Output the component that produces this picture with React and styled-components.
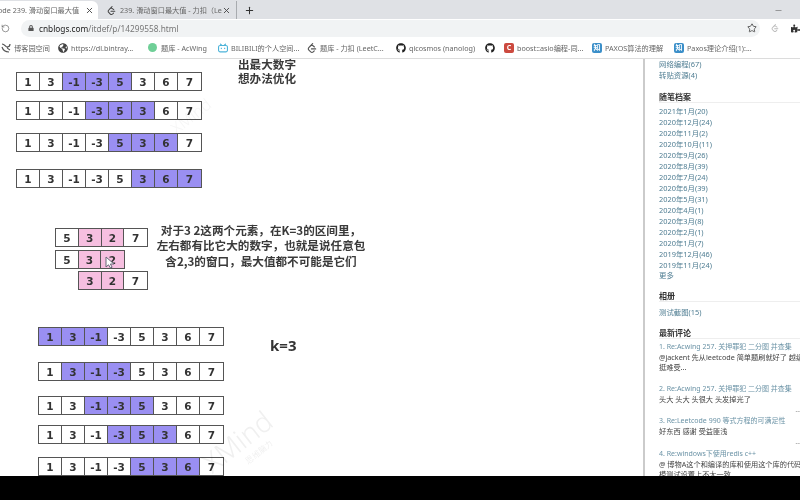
import React from 'react';
import styled, { createGlobalStyle } from 'styled-components';
import { FaGithub, FaPuzzlePiece, FaLock, FaGlobeAmericas } from 'react-icons/fa';
import { SiLeetcode, SiBilibili } from 'react-icons/si';
import { Star, RotateCw, Plus, X, Minus } from 'lucide-react';

const Global = createGlobalStyle`
  html, body { margin: 0; padding: 0; background: #000; }
  * { box-sizing: border-box; }
`;
const UI = `"Noto Sans", "Noto Sans CJK SC", sans-serif`;

const Page = styled.div`
  width: 800px; height: 500px; display: flex; flex-direction: column; overflow: hidden; background: #000;
`;
const Frame = styled.div`
  position: relative; height: 476px; display: flex; flex-direction: column; overflow: hidden;
  background: #fff; filter: blur(0.45px); font-family: ${UI};
`;
const TabStrip = styled.div`
  height: 19px; flex: none; display: flex; align-items: flex-end; background: #dfe1e5; color: #555;
`;
const ActiveTab = styled.div`
  width: 98px; height: 18px; flex: none; display: flex; align-items: center; justify-content: space-between;
  padding-right: 4px; background: #fff; border-top-right-radius: 6px; font-size: 7.2px; white-space: nowrap; overflow: hidden;
`;
const ActiveTitle = styled.span`margin-left: -2px; color: #666;`;
const InactiveTab = styled.div`
  width: 139px; height: 18px; flex: none; display: flex; align-items: center; padding-left: 9px;
  border-right: 1px solid #a8abaf; font-size: 7.2px; white-space: nowrap; color: #666;
`;
const InactiveTitle = styled.span`width: 102px; margin-left: 4px; overflow: hidden;`;
const NewTab = styled.div`margin-left: 7px; height: 18px; display: flex; align-items: center; color: #333;`;
const WindowControl = styled.div`margin-left: auto; margin-right: 17px; height: 18px; display: flex; align-items: center; color: #666;`;

const Toolbar = styled.div`
  height: 18px; flex: none; display: flex; align-items: center; gap: 8px; padding-left: 1px; background: #fff; color: #555;
`;
const AddressPill = styled.div`
  width: 745px; height: 17px; margin-left: 3px; padding: 0 3px 0 7px; display: flex; align-items: center; gap: 5px;
  background: #f1f3f4; border-radius: 9px; font-size: 8.3px;
`;
const Host = styled.span`color: #222;`;
const UrlPath = styled.span`color: #777;`;
const StarWrap = styled.span`margin-left: auto; display: flex; color: #333;`;
const Extensions = styled.div`display: flex; align-items: center; gap: 12px; margin-left: 3px; color: #333;`;
const FadedLeet = styled.span`display: flex; color: #bbb;`;

const BookmarkBar = styled.div`
  height: 22px; flex: none; display: flex; align-items: center; padding-left: 1px; background: #fff;
  border-bottom: 1px solid #dcdcdc; font-size: 7.2px; color: #666;
`;
const Bookmark = styled.div`
  width: ${p => p.$w}px; flex: none; display: flex; align-items: center; gap: 3px; white-space: nowrap; overflow: hidden;
`;
const IconBox = styled.span`
  width: 10px; height: 10px; flex: none; display: flex; align-items: center; justify-content: center;
  border-radius: 2px; background: ${p => p.$bg}; color: #fff; font-size: 7px; font-weight: 700; line-height: 1;
`;
const GreenDot = styled.span`width: 9px; height: 9px; flex: none; border-radius: 50%; background: #6fcf97; margin: 0 1px;`;

const Content = styled.div`flex: 1; min-height: 0; display: flex; overflow: hidden;`;
const Board = styled.div`width: 643px; flex: none; display: flex; flex-direction: column;`;
const Section = styled.div`
  display: flex; align-items: flex-start; margin-top: ${p => p.$top}px; padding-left: ${p => p.$left}px; gap: ${p => p.$gap}px;
`;
const Rows = styled.div`display: flex; flex-direction: column; padding-top: ${p => p.$pad || 0}px;`;
const Row = styled.div`
  width: ${p => p.$n * 23.25}px; height: 19px; margin-top: ${p => p.$top || 0}px; margin-left: ${p => p.$left || 0}px;
  display: grid; grid-template-columns: repeat(${p => p.$n}, 1fr); border: 1px solid #555; background: #fff;
`;
const Cell = styled.div`
  display: flex; align-items: center; justify-content: center; border-right: 1px solid #555;
  &:last-child { border-right: 0; }
  background: ${p => p.$bg || '#fff'}; color: #333;
  font: 700 10.5px "DejaVu Sans", sans-serif;
`;
const Note = styled.div`
  width: ${p => p.$w}px; flex: none; margin-top: ${p => p.$top}px; text-align: ${p => p.$align || 'left'};
  font: 700 11.6px/${p => p.$lh}px "Noto Sans CJK SC", sans-serif; color: #3a3a3a; white-space: nowrap;
`;
const KLabel = styled.div`margin-top: 8px; font: 700 15px/20px "Noto Sans", sans-serif; color: #333;`;

const Sidebar = styled.aside`
  flex: 1; min-width: 0; padding: 0 0 0 14px; border-left: 2px solid #cbcbcb; font-size: 7.4px; white-space: nowrap; overflow: hidden;
`;
const SideLink = styled.div`color: #4f7d92; line-height: 10.93px;`;
const SideHeading = styled.div`
  margin-top: ${p => p.$top}px; margin-bottom: ${p => p.$after || 2.5}px; height: 12px; font-size: 8px; line-height: 11px; font-weight: 700; color: #333; border-bottom: 1px solid #eee;
`;
const CommentTitle = styled.div`
  margin-top: ${p => p.$top || 0}px; color: #6b93a6; font-size: 7px; line-height: 11px;
`;
const CommentBody = styled.div`color: #444; font-size: 7.2px; line-height: 10px; overflow: hidden; padding-right: 1px;`;
const Rating = styled.div`height: 0; text-align: right; color: #888; font-size: 7px; line-height: 8px; transform: translateY(${p => p.$y}px);`;

const Watermark = styled.div`
  position: absolute; left: ${p => p.$x}px; top: ${p => p.$y}px; transform: rotate(-38deg); mix-blend-mode: multiply;
  font: 300 ${p => p.$size}px "Noto Sans", sans-serif; color: ${p => p.$color}; pointer-events: none; white-space: nowrap; line-height: 1;
`;
const Cursor = styled.svg`position: absolute; left: 105px; top: 256px;`;
const BlackBand = styled.div`height: 24px; flex: none; background: #000;`;

const P = '#9a8ff2';
const K = '#f6bfe0';
const ALL = [1, 3, -1, -3, 5, 3, 6, 7];

const Win = ({ from, top }) => (
  <Row $n={8} $top={top}>
    {ALL.map((v, i) => <Cell key={i} $bg={i >= from && i < from + 3 ? P : undefined}>{v}</Cell>)}
  </Row>
);
const Mini = ({ vals, pink, left, top }) => (
  <Row $n={vals.length} $left={left} $top={top}>
    {vals.map((v, i) => <Cell key={i} $bg={pink.includes(i) ? K : undefined}>{v}</Cell>)}
  </Row>
);

const archive = ['2021年1月(20)','2020年12月(24)','2020年11月(2)','2020年10月(11)','2020年9月(26)','2020年8月(39)','2020年7月(24)','2020年6月(39)','2020年5月(31)','2020年4月(1)','2020年3月(8)','2020年2月(1)','2020年1月(7)','2019年12月(46)','2019年11月(24)','更多'];

const BlogIcon = () => (
  <svg width="10" height="10" viewBox="0 0 10 10" fill="none" stroke="#555" strokeWidth="1.2">
    <path d="M1 4c1 3 3 5 7 5M1 1c3 0 3 3 5 3s3-1 3-3M6 4c0 1 1 2 3 3" />
  </svg>
);

export default function App() {
  return (
    <Page>
      <Global />
      <Frame>
        <TabStrip>
          <ActiveTab>
            <ActiveTitle>ode 239. 滑动窗口最大值</ActiveTitle>
            <X size={9} strokeWidth={2.4} color="#444" />
          </ActiveTab>
          <InactiveTab>
            <SiLeetcode size={9} color="#444" />
            <InactiveTitle>239. 滑动窗口最大值 - 力扣（Le</InactiveTitle>
            <X size={9} strokeWidth={2.4} color="#444" />
          </InactiveTab>
          <NewTab><Plus size={11} strokeWidth={2.2} /></NewTab>
          <WindowControl><Minus size={9} strokeWidth={1.6} /></WindowControl>
        </TabStrip>
        <Toolbar>
          <RotateCw size={9} strokeWidth={1.6} style={{ transform: 'scaleX(-1)' }} />
          <AddressPill>
            <FaLock size={6} color="#555" />
            <span><Host>cnblogs.com</Host><UrlPath>/itdef/p/14299558.html</UrlPath></span>
            <StarWrap><Star size={10} strokeWidth={1.8} /></StarWrap>
          </AddressPill>
          <Extensions>
            <FadedLeet><SiLeetcode size={8} /></FadedLeet>
            <FaPuzzlePiece size={9} />
          </Extensions>
        </Toolbar>
        <BookmarkBar>
          <Bookmark $w={57}><BlogIcon /><span>博客园空间</span></Bookmark>
          <Bookmark $w={89}><FaGlobeAmericas size={10} color="#444" /><span>https://dl.bintray...</span></Bookmark>
          <Bookmark $w={71}><GreenDot /><span>题库 - AcWing</span></Bookmark>
          <Bookmark $w={89}><SiBilibili size={10} color="#4cb3d9" /><span>BILIBILI的个人空间...</span></Bookmark>
          <Bookmark $w={89}><SiLeetcode size={10} color="#555" /><span>题库 - 力扣 (LeetC...</span></Bookmark>
          <Bookmark $w={89}><FaGithub size={10} color="#222" /><span>qicosmos (nanolog)</span></Bookmark>
          <Bookmark $w={19}><FaGithub size={10} color="#222" /></Bookmark>
          <Bookmark $w={88}><IconBox $bg="#cc4a3f">C</IconBox><span>boost::asio编程-同...</span></Bookmark>
          <Bookmark $w={82}><IconBox $bg="#3b8fc9">知</IconBox><span>PAXOS算法的理解</span></Bookmark>
          <Bookmark $w={85}><IconBox $bg="#3b8fc9">知</IconBox><span>Paxos理论介绍(1):...</span></Bookmark>
        </BookmarkBar>
        <Content>
          <Board>
            <Section $top={0} $left={16} $gap={36}>
              <Rows $pad={13}>
                <Win from={2} />
                <Win from={3} top={10} />
                <Win from={4} top={13} />
                <Win from={5} top={17} />
              </Rows>
              <Note $w={70} $top={-2} $lh={14}>出最大数字<br />想办法优化</Note>
            </Section>
            <Section $top={40} $left={55} $gap={8}>
              <Rows>
                <Mini vals={[5, 3, 2, 7]} pink={[1, 2]} />
                <Mini vals={[5, 3, 2]} pink={[1, 2]} top={3} />
                <Mini vals={[3, 2, 7]} pink={[0, 1]} left={23} top={2} />
              </Rows>
              <Note $w={210} $top={-5.5} $lh={15.5} $align="center">
                对于3 2这两个元素，在K=3的区间里，<br />
                左右都有比它大的数字，也就是说任意包<br />
                含2,3的窗口，最大值都不可能是它们
              </Note>
            </Section>
            <Section $top={37} $left={38} $gap={46}>
              <Rows>
                <Win from={0} />
                <Win from={1} top={16} />
                <Win from={2} top={15} />
                <Win from={3} top={10} />
                <Win from={4} top={13} />
              </Rows>
              <KLabel>k=3</KLabel>
            </Section>
          </Board>
          <Sidebar>
            <SideLink>网络编程(67)</SideLink>
            <SideLink>转贴资源(4)</SideLink>
            <SideHeading $top={10} $after={3.5}>随笔档案</SideHeading>
            {archive.map(a => <SideLink key={a}>{a}</SideLink>)}
            <SideHeading $top={9} $after={4.5}>相册</SideHeading>
            <SideLink>测试截图(15)</SideLink>
            <SideHeading $top={9}>最新评论</SideHeading>
            <CommentTitle>1. Re:Acwing 257. 关押罪犯 二分图 并查集</CommentTitle>
            <CommentBody>@jackent 先从leetcode 简单题刷就好了 越级<br />挺难受...</CommentBody>
            <CommentTitle $top={10.5}>2. Re:Acwing 257. 关押罪犯 二分图 并查集</CommentTitle>
            <CommentBody>头大 头大 头很大 头发掉光了</CommentBody>
            <Rating $y={3}>--</Rating>
            <CommentTitle $top={11.5}>3. Re:Leetcode 990 等式方程的可满足性</CommentTitle>
            <CommentBody>好东西 感谢 受益匪浅</CommentBody>
            <Rating $y={3}>--</Rating>
            <CommentTitle $top={11.5}>4. Re:windows下使用redis c++</CommentTitle>
            <CommentBody>@ 博物A这个和编译的库和使用这个库的代码<br />模测试设置上不太一致</CommentBody>
          </Sidebar>
        </Content>
        <Watermark $x={168} $y={108} $size={16} $color="#f6f6f6">XMind</Watermark>
        <Watermark $x={197} $y={427} $size={28} $color="#f0f0f0">XMind</Watermark>
        <Watermark $x={243} $y={448} $size={8} $color="#f0f0f0">思维脑力</Watermark>
        <Cursor width="10" height="13" viewBox="0 0 10 13">
          <path d="M1 1v10l2.5-2.2L5.5 12l1.6-.8L5.4 8H9z" fill="#fff" stroke="#667" strokeWidth="1" />
        </Cursor>
      </Frame>
      <BlackBand />
    </Page>
  );
}
